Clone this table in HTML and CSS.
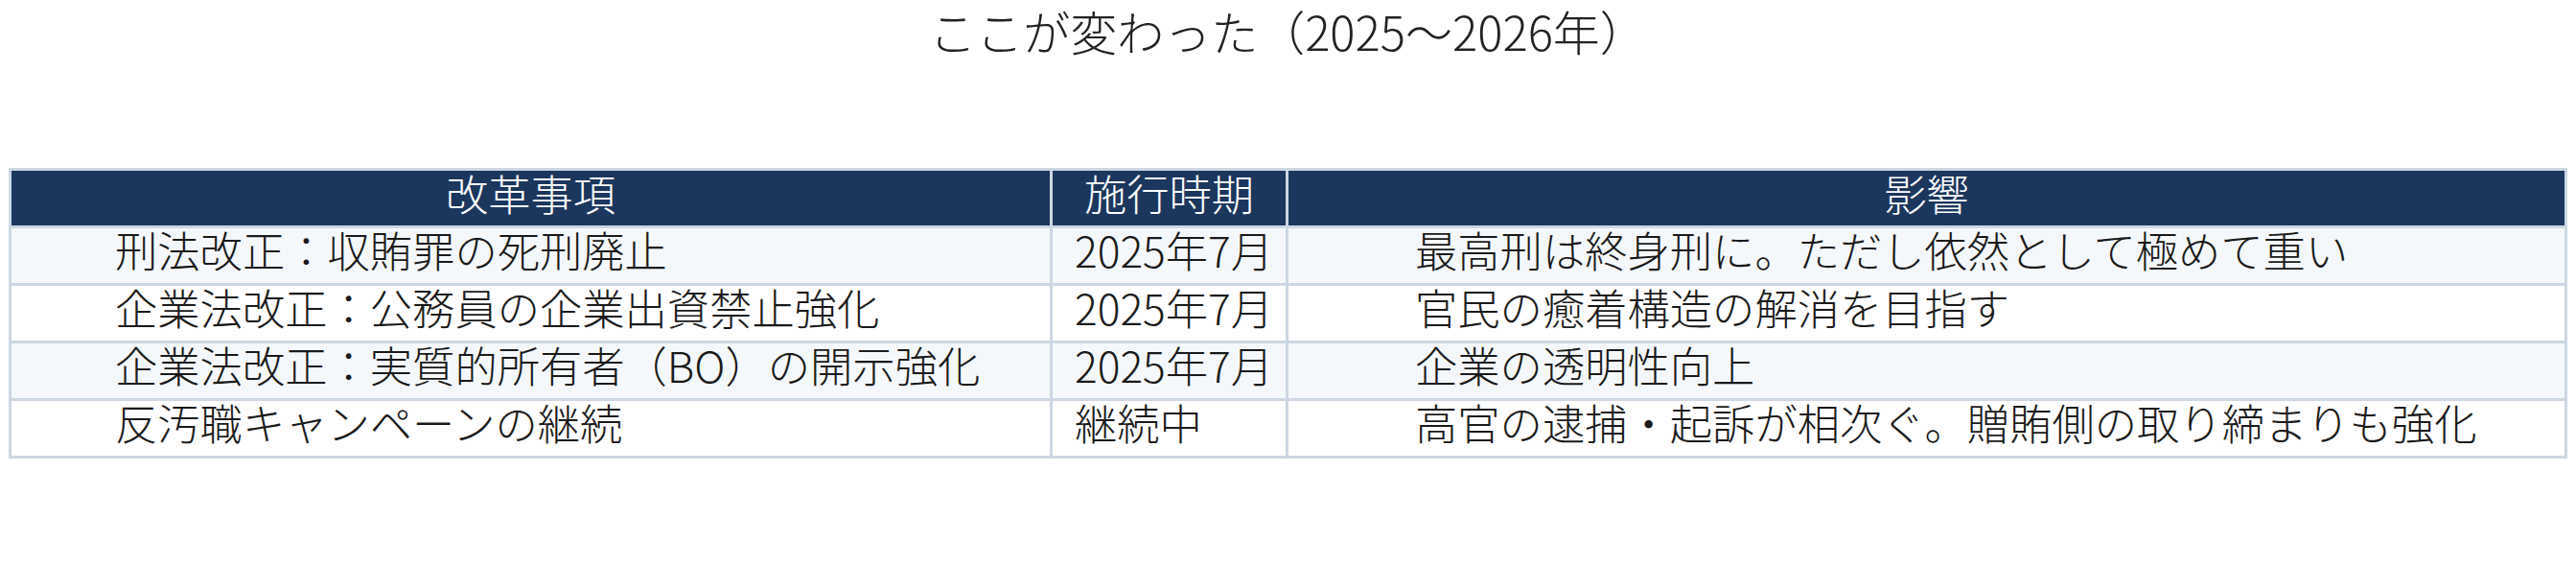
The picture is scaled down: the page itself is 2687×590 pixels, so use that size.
FILE: index.html
```html
<!DOCTYPE html>
<html lang="ja">
<head>
<meta charset="utf-8">
<title>ここが変わった</title>
<link rel="stylesheet" href="styles.css">
</head>
<body>
<div class="page">
  <h1 class="title">ここが変わった（2025〜2026年）</h1>
  <div class="grid">
    <div class="th">改革事項</div>
    <div class="th">施行時期</div>
    <div class="th">影響</div>

    <div class="td c1 alt">刑法改正：収賄罪の死刑廃止</div>
    <div class="td c2 alt">2025年7月</div>
    <div class="td c3 alt">最高刑は終身刑に。ただし依然として極めて重い</div>

    <div class="td c1">企業法改正：公務員の企業出資禁止強化</div>
    <div class="td c2">2025年7月</div>
    <div class="td c3">官民の癒着構造の解消を目指す</div>

    <div class="td c1 alt">企業法改正：実質的所有者（BO）の開示強化</div>
    <div class="td c2 alt">2025年7月</div>
    <div class="td c3 alt">企業の透明性向上</div>

    <div class="td c1">反汚職キャンペーンの継続</div>
    <div class="td c2">継続中</div>
    <div class="td c3">高官の逮捕・起訴が相次ぐ。贈賄側の取り締まりも強化</div>
  </div>
</div>
</body>
</html>
```

FILE: styles.css
```css
html, body {
  margin: 0;
  padding: 0;
  background: #ffffff;
}

body {
  font-family: "Noto Sans CJK JP", "Noto Sans", sans-serif;
  font-weight: 300;
  color: #1f1f1f;
}

.page {
  padding: 7px 9px 0 9px;
}

.title {
  margin: 0 0 119px 0;
  font-size: 49px;
  line-height: 49px;
  font-weight: 300;
  text-align: center;
  color: #222222;
}

.grid {
  display: grid;
  grid-template-columns: 1083px 243px 1331px;
  grid-auto-rows: 57px;
  gap: 3px;
  padding: 3px;
  background: #cdd7e3;
}

.th,
.td {
  font-size: 44.3px;
  line-height: 44px;
  white-space: nowrap;
}

.th {
  background: #1c375d;
  color: #ffffff;
  text-align: center;
  padding-top: 1px;
}

.td {
  background: #ffffff;
  color: #1a1a1a;
}

.td.alt {
  background: #f5f8fb;
}

.c1 {
  padding-left: 108px;
}

.c2 {
  padding-left: 23px;
}

.c3 {
  padding-left: 132px;
}
```
